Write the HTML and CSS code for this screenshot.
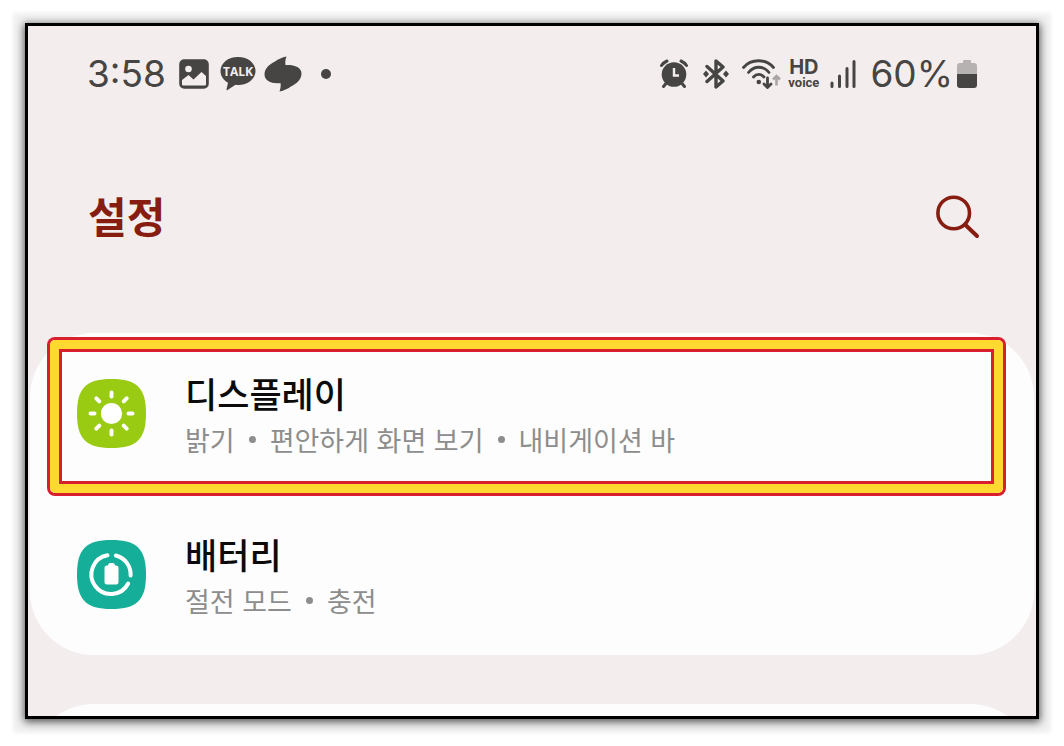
FILE: index.html
```html
<!DOCTYPE html>
<html lang="ko">
<head>
  <meta charset="UTF-8">
  <meta name="viewport" content="width=device-width, initial-scale=1">
  <title>설정</title>
  <link rel="stylesheet" href="styles.css">
</head>
<body>
  <div class="screen">
    <div class="status">
      <div class="status-left">
        <span class="clock">3:58</span>
        <svg class="icon-photo" width="30" height="30" viewBox="0 0 30 30">
          <rect x="1.200" y="1.200" width="27.600" height="27.600" rx="4" fill="#464544" stroke="#464544" stroke-width="2"/>
          <circle cx="9.500" cy="10" r="3.300" fill="#f3eeed"/>
          <path d="M3 21 9.500 16 14.500 20.500 22.500 13 27 17V25.500Q27 26.500 26 26.500H4Q3 26.500 3 25.500Z" fill="#f3eeed"/>
        </svg>
        <svg class="icon-talk" width="36" height="34" viewBox="0 0 36 34">
          <path d="M18 0C8 0 0.500 6.200 0.500 14 0.500 19 3.500 23.300 8 25.800L6.500 32.500Q6.500 33.500 7.500 33L15.500 27.800Q16.700 28 18 28C28 28 35.500 21.800 35.500 14S28 0 18 0Z" fill="#464544"/>
          <text x="18" y="19" class="talk-text" text-anchor="middle">TALK</text>
        </svg>
        <svg class="icon-swirl" width="38" height="36" viewBox="0 0 38 36">
          <path d="M22.500 0.500C21.500 3 21 6 21.500 9C30 8.500 37.500 11 37.500 17.500C37.500 24 32 28 27 30.500C23.500 33 20 34.500 15.500 35.500C16.500 32.500 17 30 16.500 27C8 28 0.500 25 0.500 18.500C0.500 12 6 8 11 5.500C14.500 3 18 1.500 22.500 0.500Z" fill="#464544"/>
        </svg>
        <span class="more-dot"></span>
      </div>
      <div class="status-right">
        <svg width="28" height="30" viewBox="0 0 28 30">
          <g stroke="#464544" fill="none" stroke-linecap="round">
            <path d="M1.500 6.500Q3.500 3.500 7 2M26.500 6.500Q24.500 3.500 21 2" stroke-width="3"/>
            <path d="M6 24.500 3.500 27.500M22 24.500 24.500 27.500" stroke-width="3"/>
          </g>
          <circle cx="14" cy="15.500" r="12.300" fill="#464544"/>
          <path d="M14 9V16.500H19" fill="none" stroke="#f3eeed" stroke-width="2.400"/>
        </svg>
        <svg class="icon-bluetooth" width="28" height="30" viewBox="0 0 28 30">
          <path d="M5 7.500 21 22 14 28V2L21 8 5 22.500" fill="none" stroke="#464544" stroke-width="3.400" stroke-linejoin="round" stroke-linecap="round"/>
          <path d="M1 15 4 11.500 7 15 4 18.500ZM21 15 24 11.500 27 15 24 18.500Z" fill="#464544"/>
        </svg>
        <svg class="icon-wifi" width="39" height="30" viewBox="0 0 39 30">
          <g fill="none" stroke="#464544" stroke-width="2.800" stroke-linecap="round">
            <path d="M1.500 8.500C9 -0.500 24 -0.500 31.500 8.500"/>
            <path d="M6.500 13.500C12 6.500 21.500 6.500 27 13.500"/>
            <path d="M11.500 18C14.500 14.500 19 14.500 22 18"/>
            <path d="M25.500 19V28M22 25 25.500 28.500 29 25"/>
          </g>
          <circle cx="16.800" cy="23" r="2.300" fill="#464544"/>
          <path d="M34.500 26.500V17M31 20.500 34.500 17 38 20.500" fill="none" stroke="#a9a6a5" stroke-width="2.600"/>
        </svg>
        <div class="hd"><b>HD</b><span>voice</span></div>
        <svg class="icon-signal" width="26" height="28" viewBox="0 0 26 28">
          <path d="M2 23V26.500M9.500 16V26.500M17 8.500V26.500M24 1.500V26.500" fill="none" stroke="#464544" stroke-width="3" stroke-linecap="round"/>
        </svg>
        <span class="percent">60%</span>
        <svg class="icon-level" width="20" height="30" viewBox="0 0 20 30">
          <path d="M0 15V7Q0 4 3 4H6V2Q6 1 7 1H13Q14 1 14 2V4H17Q20 4 20 7V15Z" fill="#b5b2b1"/>
          <path d="M0 15H20V26Q20 29 17 29H3Q0 29 0 26Z" fill="#464544"/>
        </svg>
      </div>
    </div>

    <header class="header">
      <h1>설정</h1>
      <button class="search" type="button" aria-label="검색">
        <svg width="44" height="44" viewBox="0 0 44 44">
          <circle cx="17.700" cy="18" r="15.800" fill="none" stroke="#861d10" stroke-width="3.600"/>
          <path d="M29 29.500 41 41" stroke="#861d10" stroke-width="4" stroke-linecap="round"/>
        </svg>
      </button>
    </header>

    <nav class="card">
      <a class="row marked" href="#display">
        <svg width="69" height="69" viewBox="0 0 69 69">
          <path d="M34.500 0C60 0 69 9 69 34.500S60 69 34.500 69 0 60 0 34.500 9 0 34.500 0Z" fill="#99cb13"/>
          <circle cx="34.500" cy="34.500" r="10.600" fill="#fff"/>
          <path d="M34.500 13.500V17.500M34.500 51.500V55.500M13.500 34.500H17.500M51.500 34.500H55.500M19.300 19.300 22.300 22.300M46.700 46.700 49.700 49.700M19.300 49.700 22.300 46.700M46.700 22.300 49.700 19.300" stroke="#fff" stroke-width="4" stroke-linecap="round"/>
        </svg>
        <span class="label">
          <span class="name">디스플레이</span>
          <span class="desc"><span>밝기</span><i></i><span>편안하게 화면 보기</span><i></i><span>내비게이션 바</span></span>
        </span>
      </a>
      <a class="row" href="#battery">
        <svg width="69" height="69" viewBox="0 0 69 69">
          <path d="M34.500 0C60 0 69 9 69 34.500S60 69 34.500 69 0 60 0 34.500 9 0 34.500 0Z" fill="#15ae98"/>
          <path d="M30.500 15.300A19.500 19.500 0 1 0 51.200 43.500M38.800 15.500A19.500 19.500 0 0 1 53.600 35.500" fill="none" stroke="#fff" stroke-width="4" stroke-linecap="round"/>
          <path d="M27.500 28Q27.500 25.500 30 25.500H31Q31 23 33 23H36Q38 23 38 25.500H39Q41.500 25.500 41.500 28V42Q41.500 44.500 39 44.500H30Q27.500 44.500 27.500 42Z" fill="#fff"/>
        </svg>
        <span class="label">
          <span class="name">배터리</span>
          <span class="desc"><span>절전 모드</span><i></i><span>충전</span></span>
        </span>
      </a>
    </nav>

    <div class="next"><div class="next-card"></div></div>
  </div>
</body>
</html>
```

FILE: styles.css
```css
* {
  box-sizing: border-box;
}

body {
  margin: 0;
  padding: 23px 25px 27px;
  background: #fff;
  font-family: "Noto Sans CJK KR", sans-serif;
}

svg {
  display: block;
  flex: none;
}

.screen {
  overflow: hidden;
  border: 3px solid #000;
  background: #f3eeed;
  box-shadow: 0 2px 8px 1px rgba(0, 0, 0, 0.65), 0 2px 4px 12px rgba(0, 0, 0, 0.06);
}

/* status bar */
.status {
  display: flex;
  justify-content: space-between;
  align-items: center;
  height: 38px;
  margin-top: 29px;
  padding: 0 59px;
  color: #464544;
}

.status-left, .status-right {
  display: flex;
  align-items: center;
}

.clock, .percent {
  font-family: Inter, sans-serif;
  font-size: 37px;
  font-weight: 400;
  line-height: 38px;
}

.icon-photo {
  margin-left: 13px;
}

.icon-talk {
  margin-left: 11px;
}

.icon-swirl {
  margin-left: 8px;
}

.talk-text {
  font-family: "Open Sans", sans-serif;
  font-size: 12px;
  font-weight: 700;
  fill: #f3eeed;
}

.more-dot {
  width: 10px;
  height: 10px;
  margin-left: 19px;
  border-radius: 50%;
  background: #464544;
}

.icon-bluetooth {
  margin-left: 14px;
}

.icon-wifi {
  margin-left: 12px;
}

.hd {
  display: flex;
  flex-direction: column;
  align-items: center;
  margin-left: 7px;
}

.hd b {
  font-family: Inter, sans-serif;
  font-size: 20px;
  line-height: 18px;
}

.hd span {
  font-family: Roboto, sans-serif;
  font-size: 13px;
  font-weight: 700;
  line-height: 14px;
}

.icon-signal {
  margin-left: 11px;
}

.percent {
  margin-left: 14px;
}

.icon-level {
  margin-left: 4px;
}

/* title */
.header {
  display: flex;
  justify-content: space-between;
  align-items: center;
  height: 60px;
  margin: 94px 0 86px;
  padding: 0 56px 0 60px;
}

.header h1 {
  margin: 0;
  padding-bottom: 4px;
  color: #861d10;
  font-size: 42px;
  font-weight: 700;
  line-height: 56px;
}

.search {
  padding: 0;
  border: 0;
  background: none;
  cursor: pointer;
}

/* settings list */
.card {
  margin: 0 2px;
  border-radius: 64px;
  background: #fdfdfd;
}

.row {
  position: relative;
  display: flex;
  align-items: center;
  gap: 39px;
  height: 161px;
  padding: 0 47px;
  color: #0b0b0b;
  text-decoration: none;
}

.label {
  display: flex;
  flex-direction: column;
  padding-top: 2px;
}

.name {
  font-size: 35px;
  font-weight: 500;
  line-height: 50px;
}

.desc {
  display: flex;
  align-items: center;
  color: #8d8d8d;
  font-size: 27px;
  line-height: 44px;
}

.desc i {
  width: 7px;
  height: 7px;
  margin: 0 14px;
  border-radius: 50%;
  background: #8d8d8d;
}

/* frame around the chosen row */
.marked::after {
  content: "";
  position: absolute;
  top: 7px;
  right: 31px;
  bottom: 1px;
  left: 20px;
  border: 9px solid #ffd92f;
  border-radius: 5px;
  box-shadow: 0 0 0 3px #d91e2e, inset 0 0 0 3px #d91e2e;
  pointer-events: none;
}

.next {
  height: 12px;
  margin: 49px 2px 0;
  overflow: hidden;
}

.next-card {
  height: 161px;
  border-radius: 64px;
  background: #fdfdfd;
}
```
